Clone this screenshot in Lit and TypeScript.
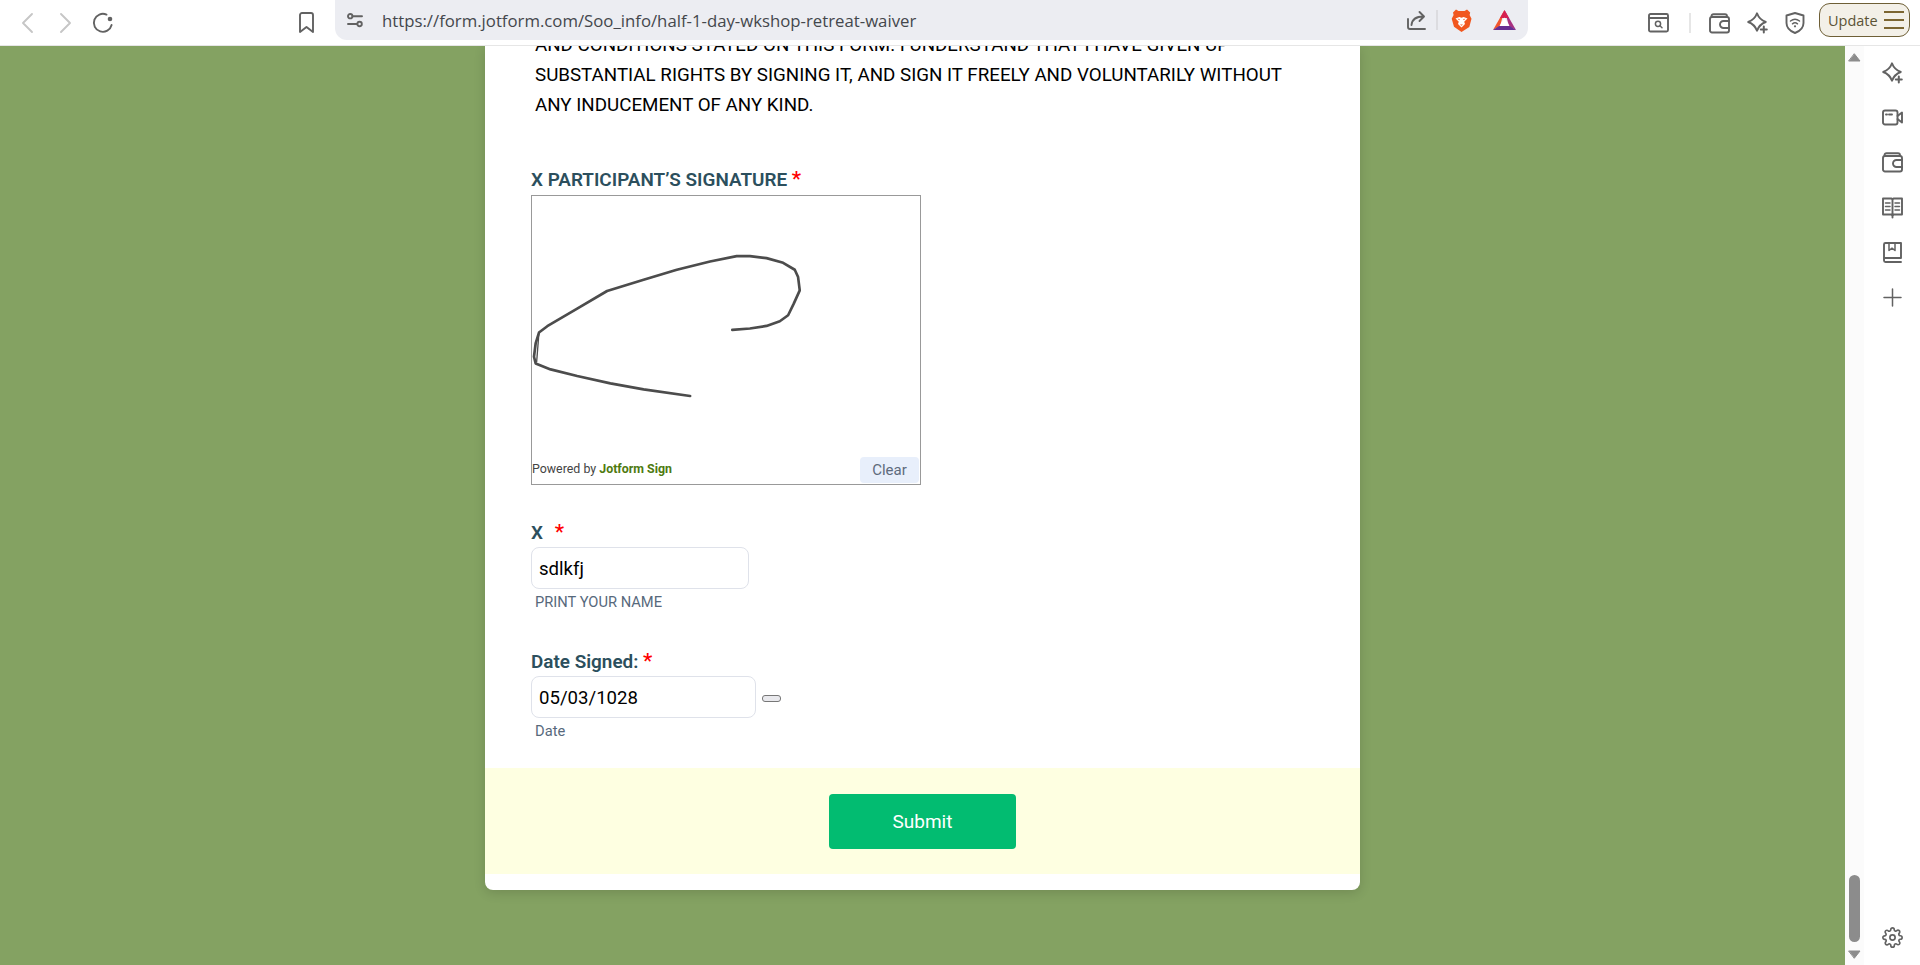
import { LitElement, html, css, svg } from "lit";
import { customElement } from "lit/decorators.js";

const sparkle = svg`<path d="M10 1.300Q12.300 7.700 18.800 10Q12.300 12.300 10 18.800Q7.700 12.300 1.200 10Q7.700 7.700 10 1.300Z"/><path class="thick" d="M16.800 14.500v6M13.800 17.500h6"/>`;
const wallet = svg`<rect x="1" y="4" width="19" height="15.500" rx="2"/><path d="M2.500 4V3.200A2 2 0 0 1 4.500 1.200H16a2 2 0 0 1 2 2V4M20 8h-5.500a3.400 3.400 0 0 0 0 7H20"/>`;
const gear = "M19.4 15a1.65 1.65 0 0 0 .33 1.82l.06.06a2 2 0 0 1 0 2.83 2 2 0 0 1-2.83 0l-.06-.06a1.65 1.65 0 0 0-1.82-.33 1.65 1.65 0 0 0-1 1.51V21a2 2 0 0 1-2 2 2 2 0 0 1-2-2v-.09A1.65 1.65 0 0 0 9 19.4a1.65 1.65 0 0 0-1.82.33l-.06.06a2 2 0 0 1-2.83 0 2 2 0 0 1 0-2.83l.06-.06a1.65 1.65 0 0 0 .33-1.82 1.65 1.65 0 0 0-1.51-1H3a2 2 0 0 1-2-2 2 2 0 0 1 2-2h.09A1.65 1.65 0 0 0 4.6 9a1.65 1.65 0 0 0-.33-1.82l-.06-.06a2 2 0 0 1 0-2.83 2 2 0 0 1 2.83 0l.06.06a1.65 1.65 0 0 0 1.82.33H9a1.65 1.65 0 0 0 1-1.51V3a2 2 0 0 1 2-2 2 2 0 0 1 2 2v.09a1.65 1.65 0 0 0 1 1.51 1.65 1.65 0 0 0 1.82-.33l.06-.06a2 2 0 0 1 2.83 0 2 2 0 0 1 0 2.83l-.06.06a1.65 1.65 0 0 0-.33 1.82V9a1.65 1.65 0 0 0 1.51 1H21a2 2 0 0 1 2 2 2 2 0 0 1-2 2h-.09a1.65 1.65 0 0 0-1.51 1z";

@customElement("app-root")
export class AppRoot extends LitElement {
  static styles = css`
    :host { display: flex; flex-direction: column; width: 1920px; height: 965px; overflow: hidden; background: #fff; font-family: Roboto, "Liberation Sans", sans-serif; color: #000; }
    svg { display: block; flex: none; fill: none; stroke: #626262; stroke-width: 1.9; stroke-linecap: round; stroke-linejoin: round; overflow: visible; }
    svg .thick { stroke-width: 2; }
    svg .dot { fill: #626262; stroke: none; }
    svg .fine { stroke-width: 1.5; }
    svg.logo { stroke: none; }

    .toolbar { flex: none; height: 45px; border-bottom: 1px solid #e6e6e6; display: flex; align-items: center; box-sizing: content-box; }
    .nav { stroke: #c6c6c6; }
    .back { margin-left: 22px; }
    .forward { margin-left: 27px; }
    .reload { margin-left: 21px; }
    .bookmark { margin-left: 186px; }
    .address { margin-left: 21px; width: 1193px; height: 40px; align-self: flex-start; flex: none; box-sizing: border-box; background: #ecedf2; border-radius: 0 0 12px 12px; display: flex; align-items: center; padding: 0 12px; }
    .url { margin-left: 19px; font-family: "Open Sans", sans-serif; font-size: 16.75px; color: #44474c; white-space: nowrap; }
    .share { margin-left: auto; }
    .sep { flex: none; width: 2px; height: 20px; background: #dcdce0; }
    .sep-a { margin-left: 10px; }
    .brave { margin-left: 13px; }
    .bat { margin-left: 21px; }
    .search { margin-left: 120px; }
    .sep-b { margin-left: 20px; background: #e6e6e6; }
    .wallet { margin-left: 18px; }
    .spark { margin-left: 17px; }
    .shield { margin-left: 17px; }
    .update { margin-left: 14px; width: 91px; height: 34px; flex: none; box-sizing: border-box; align-self: flex-start; margin-top: 3px; background: #f3f0e8; border: 1.5px solid #6e5f36; border-radius: 11px; display: flex; align-items: center; padding-left: 8px; gap: 6px; font-family: "Open Sans", sans-serif; font-size: 14.5px; color: #5b5335; }
    .menu { stroke: #7c6632; stroke-width: 2; stroke-linecap: butt; }

    .body { flex: 1; min-height: 0; display: flex; }
    .page { flex: 1; min-width: 0; background: #84a262; overflow: hidden; }
    .card { width: 875px; height: 844px; margin: 0 auto; box-sizing: border-box; background: #fff; border-radius: 0 0 8px 8px; box-shadow: 0 3px 12px rgba(0,0,0,.14); display: flex; flex-direction: column; }
    .legal { margin: -16px 0 0; padding: 0 50px; font-size: 18.75px; line-height: 30px; height: 90px; color: #000; }
    .fields { flex: none; padding: 0 0 0 46px; height: 648px; box-sizing: border-box; }
    .label { font-size: 18.9px; font-weight: 600; line-height: 24px; color: #2c4f5d; }
    .label i { font-style: normal; color: #f00; font-weight: 500; font-size: 21px; line-height: 20px; }
    .lab-sig { margin-top: 48px; height: 27px; }
    .sigbox { position: relative; width: 390px; height: 290px; box-sizing: border-box; border: 1px solid #999; display: flex; align-items: flex-end; justify-content: space-between; padding: 0 1px 1px 0; }
    .sig { position: absolute; inset: 0; width: 100%; height: 100%; stroke: #4c4c4c; stroke-width: 8; }
    .powered { font-size: 12.4px; line-height: 28px; color: #444; }
    .powered b { color: #4e7a10; font-weight: 700; }
    .clear { width: 59px; height: 26px; background: #e8effb; border-radius: 4px; font-size: 15px; line-height: 26px; text-align: center; color: #5e6b7d; }
    .lab-x { margin-top: 36px; height: 26px; }
    .lab-x i { margin-left: 7px; }
    .lab-date { margin-top: 39px; height: 26px; }
    .field { box-sizing: border-box; height: 42px; border: 1px solid #dfe2ea; border-radius: 8px; font-size: 18.6px; line-height: 42px; padding-left: 7px; background: #fff; color: #000; }
    .f-name { width: 218px; }
    .date-row { display: flex; align-items: flex-start; }
    .f-date { width: 225px; }
    .mini { flex: none; margin: 19px 0 0 6px; width: 19px; height: 7px; box-sizing: border-box; background: #e9e9ed; border: 1px solid #777; border-radius: 3px; }
    .sub { margin: 4px 0 0 4px; font-size: 14.7px; line-height: 18px; color: #57697c; }
    .submit-row { flex: none; height: 106px; background: #feffe1; display: flex; justify-content: center; padding-top: 26px; box-sizing: border-box; }
    .submit { width: 187px; height: 55px; background: #02bc71; border-radius: 4px; color: #fff; font-size: 19px; font-weight: 400; line-height: 55px; text-align: center; }

    .scroll { flex: none; width: 19px; background: #fbfbfb; display: flex; flex-direction: column; align-items: center; padding: 7px 0 6px; box-sizing: border-box; }
    .arrow { width: 13px; height: 9px; fill: #8c8c8c; stroke: #8c8c8c; stroke-width: 1; }
    .thumb { width: 11px; height: 67px; border-radius: 6px; background: #8c8c8c; margin: auto 0 8px; }
    .side { flex: none; width: 56px; display: flex; flex-direction: column; align-items: center; padding: 16px 0 17px 0; gap: 24px; box-sizing: border-box; }
    .side .gear { margin-top: auto; }
  `;

  render() {
    return html`
      <header class="toolbar">
        <svg class="nav back" width="11" height="20" viewBox="0 0 11 20"><path d="M10 1L1 10l9 9"/></svg>
        <svg class="nav forward" width="11" height="20" viewBox="0 0 11 20"><path d="M1 1l9 9-9 9"/></svg>
        <svg class="reload" width="21" height="20" viewBox="0 0 21 20"><path d="M14.500 1.600A9 9 0 1 0 19.600 12"/><circle class="dot" cx="18" cy="6" r="2.300"/></svg>
        <svg class="bookmark" width="15" height="21" viewBox="0 0 15 21"><path d="M1 3a2 2 0 0 1 2-2h9a2 2 0 0 1 2 2v17l-6.500-5L1 20z"/></svg>
        <div class="address">
          <svg width="16" height="15" viewBox="0 0 16 15"><circle cx="3.200" cy="3.200" r="2.200"/><path d="M5.600 3.200H15M1 11h9"/><circle cx="12.600" cy="11" r="2.200"/></svg>
          <span class="url">https://form.jotform.com/Soo_info/half-1-day-wkshop-retreat-waiver</span>
          <svg class="share" width="19" height="19" viewBox="0 0 19 19"><path d="M1 8v8a2 2 0 0 0 2 2h15M4.500 14C5 8.500 8.500 5.500 16.500 5.500M12.500 1l4.500 4.500-4.500 4.500"/></svg>
          <div class="sep sep-a"></div>
          <svg class="logo brave" width="21" height="23" viewBox="0 0 21 23"><path fill="#f1571f" d="M5 .5L7.500 2h6L16 .5l3.200 3-.6 2.600 1.900 3.600-2.200 8.300L10.500 23 3 17.700.7 9.700l1.900-3.600L2 3.500z"/><path fill="#fff" d="M4.500 9.500l3.800-1.600 2.200.9 2.200-.9 3.800 1.600-3.300 3.200.8 2.300-3.500 3.600L7 15l.8-2.300z"/><path fill="#f1571f" d="M6.500 9.800l2.300.3-.5 1.200zM14.500 9.800l-2.300.3.500 1.200zM9 15.500h3l-1.500 1.200z"/></svg>
          <svg class="logo bat" width="23" height="20" viewBox="0 0 23 20"><path fill="#f0552b" d="M11.500 0L0 20l7-4z"/><path fill="#a8307f" d="M11.500 0L23 20l-7-4z"/><path fill="#d6204f" d="M11.500 0L7 8h9z"/><path fill="#662d91" d="M0 20h23l-6-4H6z"/><path fill="#fff" d="M11.500 7.500l5 8.500h-10z"/></svg>
        </div>
        <svg class="search" width="21" height="19" viewBox="0 0 21 19"><rect x="1" y="1" width="19" height="17.500" rx="1.500"/><path d="M1 5h19"/><circle class="fine" cx="10" cy="10.800" r="2.600"/><path class="fine" d="M12 12.800l2 2"/></svg>
        <div class="sep sep-b"></div>
        <svg class="wallet" width="21" height="20" viewBox="0 0 21 20">${wallet}</svg>
        <svg class="spark" width="21" height="21" viewBox="0 0 21 21">${sparkle}</svg>
        <svg class="shield" width="20" height="22" viewBox="0 0 20 22"><path d="M10 1l8.500 2.500V11c0 5-4.500 8.500-8.500 10-4-1.500-8.500-5-8.500-10V3.500z"/><path class="fine" d="M5.500 9Q10 5.500 14.500 9M7.500 11.800Q10 9.800 12.500 11.800"/><circle class="dot" cx="10" cy="14.300" r="1.100"/></svg>
        <div class="update">
          <span>Update</span>
          <svg class="menu" width="20" height="18" viewBox="0 0 20 18"><path d="M0 1h20M0 9h20M0 17h20"/></svg>
        </div>
      </header>
      <div class="body">
        <main class="page">
          <section class="card">
            <p class="legal">AND CONDITIONS STATED ON THIS FORM. I UNDERSTAND THAT I HAVE GIVEN UP SUBSTANTIAL RIGHTS BY SIGNING IT, AND SIGN IT FREELY AND VOLUNTARILY WITHOUT ANY INDUCEMENT OF ANY KIND.</p>
            <div class="fields">
              <div class="label lab-sig">X PARTICIPANT’S SIGNATURE <i>*</i></div>
              <div class="sigbox">
                <svg class="sig" viewBox="64 106 1168 867" preserveAspectRatio="none"><path d="M667 509L720 505L770 497L810 483L835 465L852 430L870 390L865 350L855 328L820 307L770 293L720 287L680 287L600 303L500 328L400 358L290 392L200 445L110 498L85 517L75 550L70 590L75 610L120 628L200 648L300 670L400 688L540 708"/><path d="M85 517L78 605" stroke-width="4"/></svg>
                <span class="powered">Powered by <b>Jotform Sign</b></span>
                <div class="clear">Clear</div>
              </div>
              <div class="label lab-x">X <i>*</i></div>
              <div class="field f-name">sdlkfj</div>
              <div class="sub">PRINT YOUR NAME</div>
              <div class="label lab-date">Date Signed: <i>*</i></div>
              <div class="date-row">
                <div class="field f-date">05/03/1028</div>
                <div class="mini"></div>
              </div>
              <div class="sub">Date</div>
            </div>
            <div class="submit-row"><div class="submit">Submit</div></div>
          </section>
        </main>
        <div class="scroll">
          <svg class="arrow" viewBox="0 0 13 9"><path d="M6.500 1L12 8H1z"/></svg>
          <div class="thumb"></div>
          <svg class="arrow" viewBox="0 0 13 9"><path d="M1 1h11L6.500 8z"/></svg>
        </div>
        <aside class="side">
          <svg width="21" height="21" viewBox="0 0 21 21">${sparkle}</svg>
          <svg width="21" height="21" viewBox="0 0 21 21"><rect x="1" y="3.500" width="14.500" height="14" rx="2"/><path d="M15.500 9l4.500-3.500v10L15.500 12M4 7.500h1M7 7.500h3"/></svg>
          <svg width="21" height="21" viewBox="0 0 21 21">${wallet}</svg>
          <svg width="21" height="21" viewBox="0 0 21 21"><path d="M1 1.500h8.500l1 1 1-1H20v16h-8.500l-1 1.500-1-1.500H1zM10.500 2.500v18"/><path class="fine" d="M3.500 6h4.500M3.500 9.500h4.500M3.500 13h4.500M13 6h4.500M13 9.500h4.500M13 13h4.500"/></svg>
          <svg width="21" height="21" viewBox="0 0 21 21"><path d="M2 16V2.500A1.500 1.500 0 0 1 3.500 1H19v15zM2 16v2.500A1.500 1.500 0 0 0 3.500 20H19"/><path class="fine" d="M7 1v7.500l3-2.300 3 2.300V1"/></svg>
          <svg width="21" height="21" viewBox="0 0 21 21"><path class="fine" d="M10.500 2v17M2 10.500h17"/></svg>
          <svg class="gear" width="21" height="21" viewBox="0 0 24 24"><circle cx="12" cy="12" r="3"/><path d="${gear}"/></svg>
        </aside>
      </div>
    `;
  }
}
